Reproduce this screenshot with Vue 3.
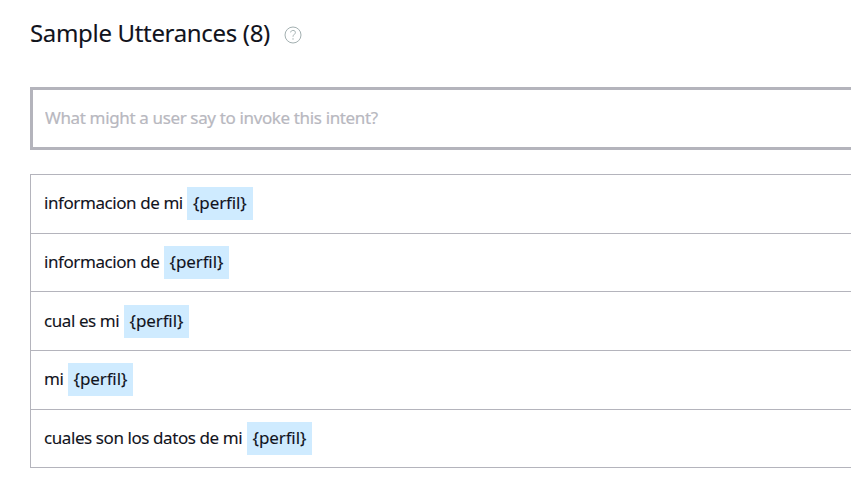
<script setup>
const utterances = [
  { text: 'informacion de mi', width: 143.4 },
  { text: 'informacion de', width: 120 },
  { text: 'cual es mi', width: 80 },
  { text: 'mi', width: 24 },
  { text: 'cuales son los datos de mi', width: 203 },
]
</script>

<template>
  <main class="page">
    <header class="heading">
      <h1>Sample Utterances (8)</h1>
      <svg class="help" viewBox="0 0 18 18" aria-label="Help">
        <circle cx="9" cy="9" r="8" />
        <path d="M6.6 6.4C6.9 3.7 11.5 3.8 11.4 6.5C11.3 8.4 9 8.5 9 10.7M9 12.2V13.7" />
      </svg>
    </header>
    <input class="entry" placeholder="What might a user say to invoke this intent?" />
    <ul class="list">
      <li v-for="item in utterances" :key="item.text" class="row">
        <span class="phrase" :style="{ width: item.width + 'px' }">{{ item.text }}</span>
        <span class="slot">{perfil}</span>
      </li>
    </ul>
  </main>
</template>

<style>
body {
  background: #fff;
  overflow: hidden;
}
</style>

<style scoped>
.page {
  box-sizing: border-box;
  width: 891px;
  height: 498px;
  padding: 14px 0 0 30px;
  font-family: "Noto Sans", "Open Sans", sans-serif;
  color: #11131c;
}
.heading {
  display: flex;
  align-items: center;
  height: 40px;
  gap: 13px;
}
h1 {
  width: 241px;
  margin: 0;
  padding-bottom: 2px;
  font-size: 24px;
  line-height: 38px;
  font-weight: 400;
  letter-spacing: -0.33px;
  white-space: nowrap;
  -webkit-text-stroke: 0.1px;
}
.help {
  width: 18px;
  height: 18px;
  margin-top: 1px;
  fill: none;
  stroke: #a3b0b1;
  stroke-width: 1;
}
.entry {
  display: block;
  box-sizing: border-box;
  width: 100%;
  height: 63px;
  margin: 33px 0 24px;
  padding: 0 12px 2px;
  border: 3px solid #b4b4bc;
  border-radius: 0;
  outline: none;
  background: #fff;
  font: 400 17px "Noto Sans", sans-serif;
  letter-spacing: -0.36px;
}
.entry::placeholder {
  color: #b8b8c0;
  opacity: 1;
  -webkit-text-stroke: 0.2px;
}
.list {
  list-style: none;
  margin: 0;
  padding: 0;
  border: 1px solid #b4b4bc;
  border-bottom: 0;
}
.row {
  display: flex;
  align-items: center;
  box-sizing: border-box;
  height: 58.65px;
  padding-left: 13px;
  border-bottom: 1px solid #b4b4bc;
  font-size: 17px;
  letter-spacing: -0.42px;
  white-space: nowrap;
  -webkit-text-stroke: 0.1px;
}
.phrase {
  flex: none;
  line-height: 23px;
  padding-bottom: 2px;
}
.slot {
  box-sizing: border-box;
  width: 65.3px;
  height: 33px;
  padding-left: 5.6px;
  line-height: 32px;
  letter-spacing: -0.12px;
  background: #cfebff;
}
</style>
